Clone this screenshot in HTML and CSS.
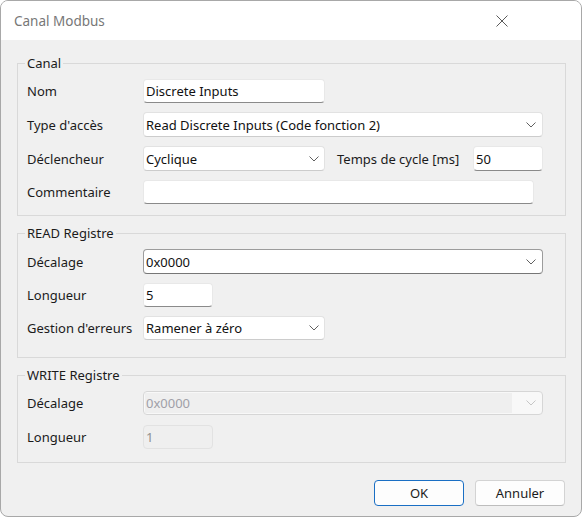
FILE: index.html
```html
<!DOCTYPE html>
<html lang="fr">
<head>
<meta charset="utf-8">
<title>Canal Modbus</title>
<link rel="stylesheet" href="styles.css">
</head>
<body>
<div class="window">
  <div class="titlebar">
    <span class="title">Canal Modbus</span>
    <svg class="close" width="12" height="12" viewBox="0 0 12 12"><path d="M0.5 0.5 L11.5 11.5 M11.5 0.5 L0.5 11.5" stroke="#5a5a5a" stroke-width="1" fill="none"/></svg>
  </div>
  <div class="content">
    <fieldset class="group canal">
      <legend>Canal</legend>
      <div class="form">
        <div class="label">Nom</div>
        <div class="cell"><div class="edit w182">Discrete Inputs</div></div>

        <div class="label">Type d'accès</div>
        <div class="cell"><div class="combo full"><span>Read Discrete Inputs (Code fonction 2)</span><svg class="chev" width="10" height="6" viewBox="0 0 10 6"><polyline points="0.5,0.5 5,5 9.5,0.5" fill="none" stroke="#606060" stroke-width="1"/></svg></div></div>

        <div class="label">Déclencheur</div>
        <div class="cell split">
          <div class="combo w182 narrow"><span>Cyclique</span><svg class="chev" width="10" height="6" viewBox="0 0 10 6"><polyline points="0.5,0.5 5,5 9.5,0.5" fill="none" stroke="#606060" stroke-width="1"/></svg></div>
          <div class="sublabel">Temps de cycle [ms]</div>
          <div class="edit w70 push">50</div>
        </div>

        <div class="label">Commentaire</div>
        <div class="cell"><div class="edit w391"></div></div>
      </div>
    </fieldset>

    <fieldset class="group read">
      <legend>READ Registre</legend>
      <div class="form">
        <div class="label">Décalage</div>
        <div class="cell"><div class="combo full editable"><span>0x0000</span><svg class="chev" width="10" height="6" viewBox="0 0 10 6"><polyline points="0.5,0.5 5,5 9.5,0.5" fill="none" stroke="#606060" stroke-width="1"/></svg></div></div>

        <div class="label">Longueur</div>
        <div class="cell"><div class="edit w70">5</div></div>

        <div class="label">Gestion d'erreurs</div>
        <div class="cell"><div class="combo w182 narrow"><span>Ramener à zéro</span><svg class="chev" width="10" height="6" viewBox="0 0 10 6"><polyline points="0.5,0.5 5,5 9.5,0.5" fill="none" stroke="#606060" stroke-width="1"/></svg></div></div>
      </div>
    </fieldset>

    <fieldset class="group write">
      <legend>WRITE Registre</legend>
      <div class="form">
        <div class="label">Décalage</div>
        <div class="cell"><div class="combo full disabled"><span class="field">0x0000</span><svg class="chev" width="10" height="6" viewBox="0 0 10 6"><polyline points="0.5,0.5 5,5 9.5,0.5" fill="none" stroke="#c6c6c6" stroke-width="1"/></svg></div></div>

        <div class="label">Longueur</div>
        <div class="cell"><div class="edit w70 disabled">1</div></div>
      </div>
    </fieldset>

    <div class="buttons">
      <button class="btn default">OK</button>
      <button class="btn">Annuler</button>
    </div>
  </div>
</div>
</body>
</html>
```

FILE: styles.css
```css
* { box-sizing: border-box; }

html, body {
  margin: 0;
  padding: 0;
}

body {
  width: 582px;
  height: 517px;
  overflow: hidden;
  background: #ffffff;
  font-family: "Noto Sans", "Open Sans", sans-serif;
  font-size: 13px;
  color: #1b1b1b;
}

.window {
  width: 582px;
  height: 517px;
  border: 1px solid #a8a8a8;
  border-radius: 8px;
  overflow: hidden;
  background: #f0f0f0;
  display: flex;
  flex-direction: column;
}

.titlebar {
  flex: none;
  height: 39px;
  background: #ffffff;
  display: flex;
  align-items: center;
  justify-content: space-between;
  padding-left: 13px;
  padding-top: 1px;
}

.title {
  color: #777777;
  font-size: 13.5px;
  line-height: 16px;
}

.close {
  margin-right: 73px;
  display: block;
}

.content {
  flex: 1;
  display: flex;
  flex-direction: column;
  padding: 15px 15px 0 16px;
}

.group {
  margin: 0;
  min-width: 0;
  border: 1px solid #d9d9d9;
  padding: 8px 22px 11px 9px;
}

.group + .group {
  margin-top: 9px;
}

.group legend {
  padding: 0 2px;
  margin-left: -2px;
  line-height: 16px;
  height: 16px;
  color: #1b1b1b;
}

.form {
  display: grid;
  grid-template-columns: 116px 1fr;
  row-gap: 9px;
}

.canal .form { grid-template-rows: 24px 25px 25px 24px; }
.read { padding-bottom: 17px; }
.read .form { grid-template-rows: 25px 24px 24px; }
.write { padding-bottom: 13px; }
.write .form { grid-template-rows: 24px 24px; row-gap: 10px; }

.label {
  display: flex;
  align-items: center;
  white-space: nowrap;
}

.cell {
  display: flex;
  align-items: stretch;
  min-width: 0;
}

.split {
  align-items: stretch;
}

.sublabel {
  margin-left: 12px;
  display: flex;
  align-items: center;
  white-space: nowrap;
}

.push { margin-left: auto; }

.edit {
  background: #ffffff;
  border: 1px solid #e8e8e8;
  border-bottom-color: #8a8a8a;
  border-radius: 4px;
  padding: 0 2px;
  display: flex;
  align-items: center;
  color: #111111;
  white-space: nowrap;
}

.edit.disabled {
  background: #efefef;
  border-color: #e2e2e2;
  color: #8f8f8f;
}

.combo {
  background: #ffffff;
  border: 1px solid #e2e2e2;
  border-bottom-color: #cccccc;
  border-radius: 4px;
  padding: 0 6px 0 2px;
  display: flex;
  align-items: center;
  justify-content: space-between;
  color: #111111;
  white-space: nowrap;
}

.combo.narrow { padding-right: 5px; }

.combo.editable {
  border-color: #9c9c9c;
  border-bottom-color: #767676;
}

.combo.disabled {
  background: #f8f8f8;
  border-color: #d6d6d6;
  color: #a0a0a8;
  padding: 1px 6px 1px 1px;
  align-items: stretch;
}

.combo.disabled .field {
  flex: 1;
  background: #efefef;
  display: flex;
  align-items: center;
  padding-left: 1px;
  margin-right: 14px;
}

.combo.disabled .chev { align-self: center; }

.chev { display: block; flex: none; }

.full { width: 100%; }
.w182 { width: 182px; }
.w70 { width: 70px; }
.w391 { width: 391px; }

.buttons {
  display: flex;
  justify-content: flex-end;
  gap: 11px;
  margin-top: 17px;
  padding-right: 1px;
}

.btn {
  width: 90px;
  height: 26px;
  background: #fdfdfd;
  border: 1px solid #d3d3d3;
  border-bottom-color: #bdbdbd;
  border-radius: 4px;
  font-family: inherit;
  font-size: 13px;
  color: #1b1b1b;
  padding: 0;
}

.btn.default {
  border-color: #1a6fc4;
}
```
